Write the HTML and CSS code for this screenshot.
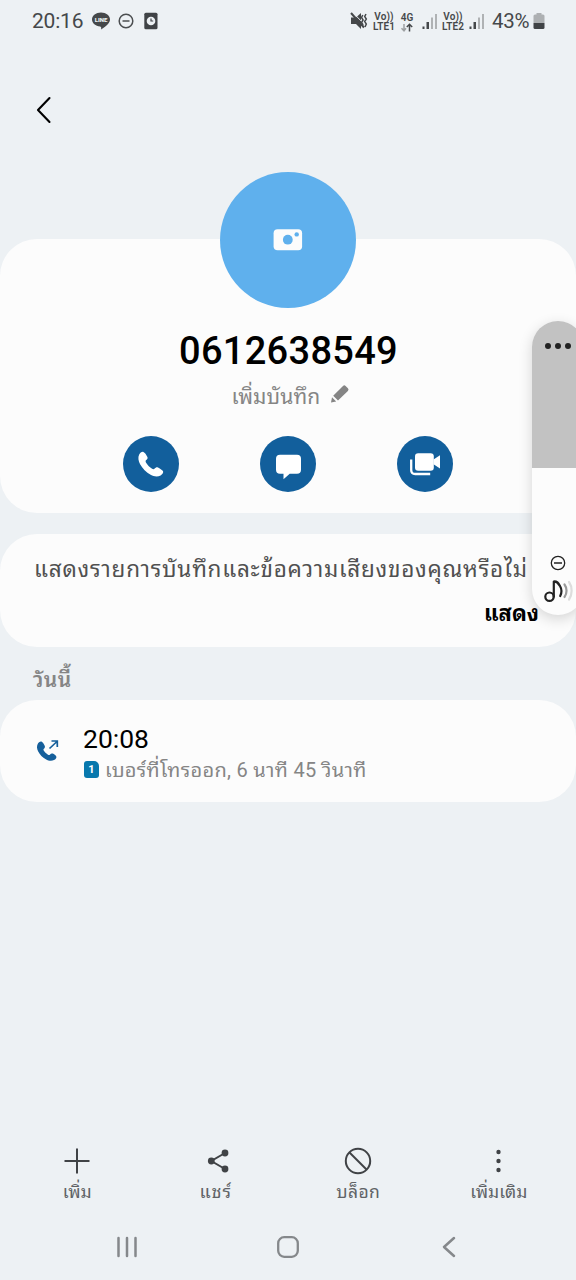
FILE: index.html
```html
<!DOCTYPE html>
<html lang="th">
<head>
<meta charset="utf-8">
<title>0612638549</title>
<link rel="stylesheet" href="styles.css">
</head>
<body>
<div class="phone">
  <header class="status">
    <span class="clock">20:16</span>
    <svg class="st-line" width="20" height="20" viewBox="0 0 20 20"><path fill="#45484a" d="M10 1.500c5 0 9 3.100 9 7 0 3.500-3.500 6.500-9 10 .4-1.600.4-2.600-.8-3C4.500 15 1 12.200 1 8.500c0-3.900 4-7 9-7z"/><text x="10" y="10.700" class="line-word">LINE</text></svg>
    <svg class="st-dnd" width="16" height="16" viewBox="0 0 16 16" fill="none" stroke="#4b4e50" stroke-width="1.500"><circle cx="8" cy="8" r="6.800"/><path d="M4.500 8h7"/></svg>
    <svg class="st-alarm" width="14" height="18" viewBox="0 0 14 18"><rect x=".3" y=".8" width="13.200" height="16.400" rx="1.500" fill="#404346"/><circle cx="7" cy="9" r="4.300" fill="#edf1f4"/><path d="M7 6.500V9h2.200" stroke="#404346" stroke-width="1.200" fill="none"/></svg>
    <span class="grow"></span>
    <svg class="st-mute" width="18" height="18" viewBox="0 0 18 18"><path d="M1 5.500h5l5-4.500v16l-5-5H1z" fill="#45484a"/><path d="M3 .8l9 9" stroke="#edf1f4" stroke-width="1"/><path d="M1 1l13 14.500" stroke="#45484a" stroke-width="2"/><path d="M12.800 3l-1.300 2.500 1.600 2.500-1.600 2.500 1.600 2.500M16 2l-1.300 2.500L16.300 7l-1.600 2.500 1.600 2.500-1.300 3" fill="none" stroke="#45484a" stroke-width="1.500"/></svg>
    <span class="net n1"><b>Vo))</b><b>LTE1</b></span>
    <span class="net n2"><b>4G</b><svg width="14" height="9" viewBox="0 0 14 9" fill="none" stroke-width="1.500"><path d="M4 1v7M1.500 5.300L4 7.800l2-2.500" stroke="#9da0a2"/><path d="M9.500 8.500V1.500M6.800 4l2.700-2.700L12.200 4" stroke="#45484a"/></svg></span>
    <svg class="sig s1" width="16" height="17" viewBox="0 0 16 17"><path fill="#45484a" d="M.5 13.500H2.500V16H.5zM4.500 9H7v7H4.500z"/><path fill="#afb2b4" d="M9 4.500h2V16H9zM13 1h2v15h-2z"/></svg>
    <span class="net n3"><b>Vo))</b><b>LTE2</b></span>
    <svg class="sig s2" width="16" height="17" viewBox="0 0 16 17"><path fill="#45484a" d="M.5 13.500H2.500V16H.5zM4.500 9H7v7H4.500z"/><path fill="#afb2b4" d="M9 4.500h2V16H9zM13 1h2v15h-2z"/></svg>
    <span class="pct">43%</span>
    <svg class="batt" width="12" height="18" viewBox="0 0 12 18"><path d="M3.500 1h5v1.500H10q1.500 0 1.500 1.500v7H.5V4Q.5 2.500 2 2.500h1.500z" fill="#adb0b2"/><path d="M.5 11h11v4.500q0 1.500-1.500 1.500H2q-1.500 0-1.500-1.500z" fill="#404346"/></svg>
  </header>

  <div class="topbar"><svg width="16" height="28" viewBox="0 0 16 28" fill="none" stroke="#000" stroke-width="2.100" stroke-linecap="round" stroke-linejoin="round"><path d="M13.500 2L2 14l11.500 12"/></svg></div>

  <main>
    <section class="card profile">
      <div class="avatar"><svg width="30" height="24" viewBox="0 0 30 24"><rect x=".6" y="1.200" width="28.500" height="21" rx="4" fill="#fcfcfc"/><circle cx="14.800" cy="11.700" r="4.900" fill="#5fb0ed"/><circle cx="23.700" cy="6.400" r="2.200" fill="#5fb0ed"/></svg></div>
      <h1 class="number">0612638549</h1>
      <div class="note"><span class="note-text">เพิ่มบันทึก</span><svg width="20" height="20" viewBox="0 0 20 20" fill="#858585"><path d="M1 18.500l1-5.300 4.200 4.200zM3.200 11.800L13 2q1.300-1.300 2.600 0l2.300 2.300q1.300 1.300 0 2.600L8 16.600z"/></svg></div>
      <div class="actions">
        <span class="action"><svg width="56" height="56" viewBox="0 0 56 56"><path fill="#fff" d="M16.200 18.500c.8-1.500 2.600-3 4.200-2.600 1.300.3 3 3 4 5 .6 1.300-.2 2.300-1.200 3.200-.8.800-.7 1.700-.1 2.700 1.600 2.600 3.600 4.600 6 6 1 .6 1.900.5 2.600-.3.900-1 2-1.800 3.300-1.100 1.600.9 4.200 2.500 5 3.700.8 1.600-.8 3.600-2.400 4.400-2.800 1.500-6.600 1.300-10-.7-4.300-2.500-8.200-6.300-10.500-10.600-1.700-3.200-2.400-6.800-.9-9.700z"/></svg></span>
        <span class="action"><svg width="56" height="56" viewBox="0 0 56 56"><path fill="#fff" d="M20 18.700h17q4 0 4 4v11.100q0 4-4 4h-7.300l-6.200 5.400v-5.400H20q-4 0-4-4V22.700q0-4 4-4z"/></svg></span>
        <span class="action"><svg width="56" height="56" viewBox="0 0 56 56"><rect x="18" y="17.300" width="18.800" height="17.500" rx="3.200" fill="#fff"/><path fill="#fff" d="M36.500 23.500l6.500-4.300v13.300l-6.500-4.200z"/><path d="M14.200 23.500V34q0 4 4 4h15" fill="none" stroke="#fff" stroke-width="2.300"/></svg></span>
      </div>
    </section>

    <section class="card prompt">
      <p class="question">แสดงรายการบันทึกและข้อความเสียงของคุณหรือไม่</p>
      <p class="show">แสดง</p>
    </section>

    <h2 class="day">วันนี้</h2>

    <section class="card call">
      <svg class="outgoing" width="24" height="24" viewBox="0 0 24 24"><path fill="#155f9b" d="M1.700 5.100C2.500 3.200 4.700 2 6 2.900c1.500 1 2.300 2.700 2.800 4.100.4 1.200-.1 2-.9 2.700-.7.700-.5 1.300 0 2.100 1.200 1.800 2.400 2.900 4.100 3.900.8.500 1.500.4 2.100-.3.800-.9 1.700-1.300 2.700-.8 1.200.6 3 1.700 3.500 2.900.6 1.400-.8 3-2.300 3.600-2.600 1.200-5.500.7-8.200-.9-3.200-1.800-6-4.600-7.600-7.800C.8 10 .6 7.400 1.700 5.100z"/><path d="M13.500 9.500l7.500-7M15.500 2h5.800v6" fill="none" stroke="#155f9b" stroke-width="1.700"/></svg>
      <div class="call-info">
        <div class="call-time">20:08</div>
        <div class="call-meta"><span class="sim">1</span><span class="meta-text">เบอร์ที่โทรออก, 6 นาที 45 วินาที</span></div>
      </div>
    </section>
  </main>

  <footer>
    <div class="tools">
      <div class="tool"><svg width="30" height="30" viewBox="0 0 30 30"><path d="M15 2.500v25M2.500 15h25" stroke="#404346" stroke-width="2"/></svg><span class="t1">เพิ่ม</span></div>
      <div class="tool"><svg width="30" height="30" viewBox="0 0 30 30"><path d="M22 7L8.300 15 22 23" fill="none" stroke="#404346" stroke-width="2"/><g fill="#404346"><circle cx="22" cy="7" r="3.400"/><circle cx="8.300" cy="15" r="3.400"/><circle cx="22" cy="23" r="3.400"/></g></svg><span class="t2">แชร์</span></div>
      <div class="tool"><svg width="30" height="30" viewBox="0 0 30 30" fill="none" stroke="#404346" stroke-width="2"><circle cx="15" cy="15" r="12.200"/><path d="M6.500 6.500l17 17"/></svg><span class="t3">บล็อก</span></div>
      <div class="tool"><svg width="30" height="30" viewBox="0 0 30 30" fill="#404346"><circle cx="14.500" cy="6" r="2.200"/><circle cx="14.500" cy="15" r="2.200"/><circle cx="14.500" cy="24" r="2.200"/></svg><span class="t4">เพิ่มเติม</span></div>
    </div>
    <nav class="nav" aria-label="ระบบ">
      <svg width="24" height="24" viewBox="0 0 24 24" stroke="#85888b" stroke-width="2.500" stroke-linecap="round"><path d="M3.500 3v18M12 3v18M20.500 3v18"/></svg>
      <svg width="24" height="24" viewBox="0 0 24 24" fill="none" stroke="#85888b" stroke-width="2.300"><rect x="2.200" y="2.200" width="19.600" height="19.600" rx="6"/></svg>
      <svg width="24" height="24" viewBox="0 0 24 24" fill="none" stroke="#85888b" stroke-width="2.500" stroke-linecap="round" stroke-linejoin="round"><path d="M17 3L7 12l10 9"/></svg>
    </nav>
  </footer>

  <aside class="volume">
    <div class="level"><svg width="28" height="8" viewBox="0 0 28 8" fill="#222"><circle cx="4" cy="4" r="3"/><circle cx="14" cy="4" r="3"/><circle cx="24" cy="4" r="3"/></svg></div>
    <svg class="v-dnd" width="16" height="16" viewBox="0 0 16 16" fill="none" stroke="#222" stroke-width="1.300"><circle cx="8" cy="8" r="6.700"/><path d="M4 8h8"/></svg>
    <svg class="v-note" width="30" height="24" viewBox="0 0 30 24" fill="none" stroke="#222" stroke-width="2.200" stroke-linecap="round" stroke-linejoin="round"><circle cx="5.500" cy="17.700" r="4.200"/><path d="M9.800 17.700V2.500c3.500-.3 4.500 1.700 6.200 4.500 2 3.500 2 6.500.2 10"/><path d="M20.500 5.500c2.700 3.600 2.700 9 0 12.500" stroke="#999"/><path d="M25 3c3.500 5 3.500 12.500 0 17.500" stroke="#ddd"/></svg>
  </aside>
</div>
</body>
</html>
```
FILE: styles.css
```css
* { box-sizing: border-box; }
body { margin: 0; background: #edf1f4; font-family: Roboto, "Noto Sans Thai Looped", "Noto Looped Thai", "Droid Sans Thai", "Waree", "Loma", "Garuda", "Noto Sans Thai", sans-serif; }
h1, h2, p { margin: 0; }
svg { display: block; flex: none; }
span { white-space: nowrap; }

.phone { position: relative; width: 576px; height: 1280px; display: flex; flex-direction: column; overflow: hidden; background: #edf1f4; }

.status { height: 44px; flex: none; display: flex; align-items: center; padding: 0 31px 2px 32px; color: #45484a; }
.clock { font-size: 21px; width: 59px; letter-spacing: -.2px; }
.line-word { font: 900 6px Roboto, sans-serif; fill: #edf1f4; text-anchor: middle; }
.st-dnd { margin-left: 7px; }
.st-alarm { margin-left: 10px; }
.grow { flex: 1; }
.net { display: flex; flex-direction: column; align-items: center; padding-top: 2px; font-size: 10px; line-height: 10px; letter-spacing: .1px; }
.net b { font-weight: 600; }
.n1, .n3 { width: 22px; }
.n1 { margin-left: 5px; }
.n2 { width: 14px; margin-left: 5px; }
.s1 { margin: 0 4px 0 8px; }
.s2 { margin-left: 5px; }
.pct { font-size: 20.500px; margin-left: 7px; width: 41px; letter-spacing: -.3px; }

.topbar { height: 132px; flex: none; display: flex; align-items: center; padding-left: 36px; }
.card { background: #fcfcfc; border-radius: 37px; }
.profile { margin-top: 63px; height: 274px; display: flex; flex-direction: column; align-items: center; }
.avatar { width: 136px; height: 136px; flex: none; margin-top: -67px; border-radius: 50%; background: #5fb0ed; display: flex; align-items: center; justify-content: center; }
.number { margin-top: 20px; padding-left: 1px; font-size: 38px; line-height: 46px; font-weight: 500; letter-spacing: .3px; color: #000; }
.note { margin: 5px 0 2px 5px; height: 30px; width: 118px; display: flex; align-items: center; justify-content: space-between; color: #858585; font-size: 21px; letter-spacing: .1px; }
.actions { width: 330px; margin-top: 25px; display: flex; justify-content: space-between; }
.action { width: 56px; height: 56px; border-radius: 50%; background: #125f9c; }

.prompt { margin-top: 21px; height: 113px; padding: 18px 37px 0 34px; }
.question { font-size: 22.500px; line-height: 34px; letter-spacing: .75px; color: #505050; white-space: nowrap; }
.show { margin-top: 11px; font-size: 22px; line-height: 34px; font-weight: 700; text-align: right; color: #000; }
.day { height: 53px; padding: 17px 0 0 33px; font-size: 21px; line-height: 32px; font-weight: 600; letter-spacing: .4px; color: #858585; }
.call { height: 102px; display: flex; padding: 22px 34px 0 36px; }
.outgoing { margin-top: 17px; }
.call-info { margin-left: 23px; }
.call-time { font-size: 26.500px; line-height: 34px; color: #000; }
.call-meta { height: 28px; display: flex; align-items: center; color: #858585; font-size: 20px; letter-spacing: .3px; }
.meta-text { padding-bottom: 5px; }
.sim { width: 15px; height: 17px; margin: -2px 6px 0 1px; border-radius: 3px 5px 3px 3px; background: #0878ad; color: #fff; font-size: 11px; font-weight: 700; line-height: 17px; text-align: center; }

footer { margin-top: auto; }
.tools { display: grid; grid-template-columns: repeat(4, 1fr); padding: 0 7px; height: 68px; }
.tool { display: flex; flex-direction: column; align-items: center; color: #606366; font-size: 17.500px; line-height: 30px; }
.tool span { margin-top: 1px; }
.t2 { font-size: 18px; letter-spacing: 1px; margin-right: 4px; }
.t3 { letter-spacing: .4px; }
.nav { height: 66px; display: flex; justify-content: space-between; align-items: center; padding: 0 115px; }

.volume { position: absolute; left: 532px; top: 321px; width: 52px; height: 294px; border-radius: 26px; overflow: hidden; background: #fcfcfc; box-shadow: 0 4px 14px rgba(0, 0, 0, .16); }
.level { height: 147px; padding: 21px 0 0 12px; background: #c2c2c2; }
.v-dnd { margin: 87px 0 0 18px; }
.v-note { margin: 8px 0 0 12px; }
```
